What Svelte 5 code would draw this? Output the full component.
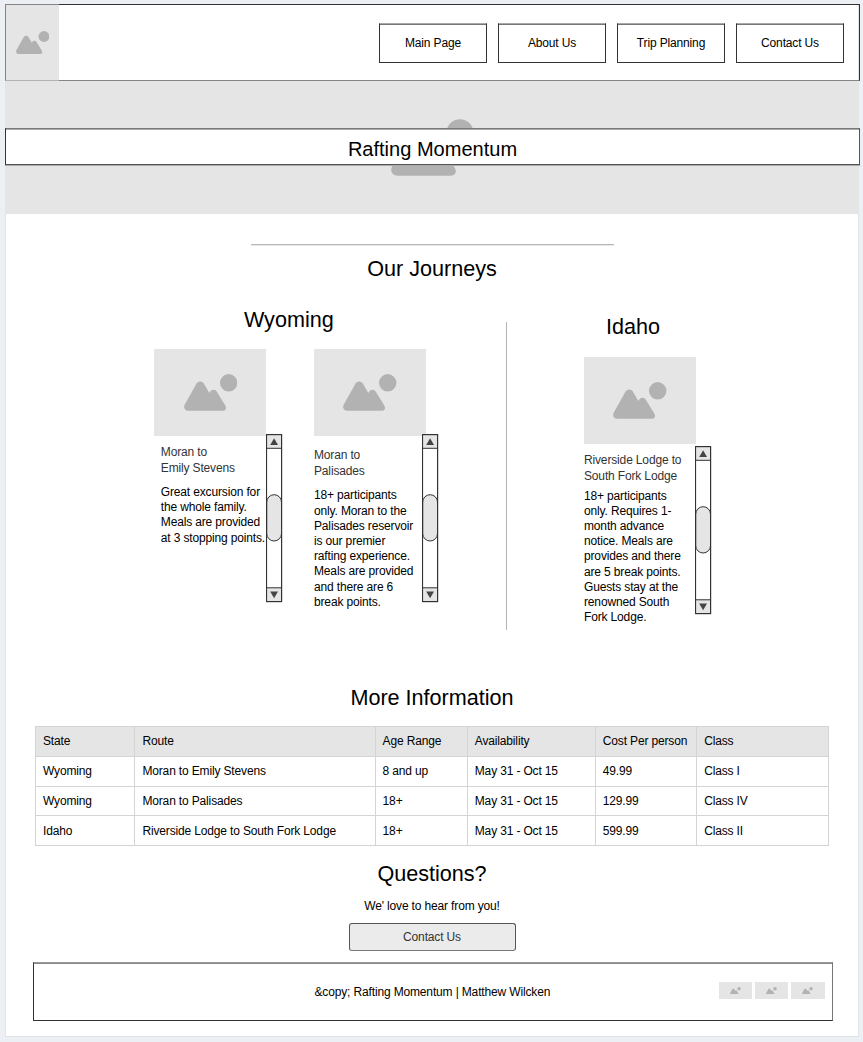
<script>
  const nav = ['Main Page', 'About Us', 'Trip Planning', 'Contact Us'];

  const emily = {
    kind: 'emily',
    title: ['Moran to', 'Emily Stevens'],
    lines: ['Great excursion for', 'the whole family.', 'Meals are provided', 'at 3 stopping points.'],
  };
  const palisades = {
    kind: 'palisades',
    title: ['Moran to', 'Palisades'],
    lines: [
      '18+ participants',
      'only. Moran to the',
      'Palisades reservoir',
      'is our premier',
      'rafting experience.',
      'Meals are provided',
      'and there are 6',
      'break points.',
    ],
  };
  const riverside = {
    kind: 'riverside',
    title: ['Riverside Lodge to', 'South Fork Lodge'],
    lines: [
      '18+ participants',
      'only. Requires 1-',
      'month advance',
      'notice. Meals are',
      'provides and there',
      'are 5 break points.',
      'Guests stay at the',
      'renowned South',
      'Fork Lodge.',
    ],
  };

  const columns = ['State', 'Route', 'Age Range', 'Availability', 'Cost Per person', 'Class'];
  const rows = [
    ['Wyoming', 'Moran to Emily Stevens', '8 and up', 'May 31 - Oct 15', '49.99', 'Class I'],
    ['Wyoming', 'Moran to Palisades', '18+', 'May 31 - Oct 15', '129.99', 'Class IV'],
    ['Idaho', 'Riverside Lodge to South Fork Lodge', '18+', 'May 31 - Oct 15', '599.99', 'Class II'],
  ];
</script>

{#snippet picture(width)}
  <svg class="picture" viewBox="0 0 53.4 37" {width} height={(width * 37) / 53.4} aria-hidden="true">
    <path d="M4.5 36.8C.8 36.8-.9 33.6.8 30.5L12 10.4C14 6.6 18.4 6.6 20.4 10.4L25.4 18.9C27.4 14.8 31 14.8 33 18L41.3 31.6C43 34.5 41.5 36.8 38.5 36.8Z" />
    <circle cx="44.7" cy="8.8" r="8.7" />
  </svg>
{/snippet}

{#snippet scrollbar()}
  <svg class="scrollbar" viewBox="0 0 17 169" width="17" height="169" aria-hidden="true">
    <rect x="0.6" y="0.7" width="15.4" height="167.3" fill="#fff" />
    <rect x="0.6" y="0.7" width="15.4" height="13.7" fill="#e5e5e5" />
    <rect x="0.6" y="153.5" width="15.4" height="14" fill="#e5e5e5" />
    <path d="M8.1 4.3L12 11H4.2Z" fill="#444" />
    <path d="M8.1 164.2L12 157.5H4.2Z" fill="#444" />
    <rect x="0.7" y="60.7" width="14.8" height="46.3" rx="7.4" fill="#e5e5e5" />
    <g fill="none" stroke="#333">
      <rect x="0.5" y="0.6" width="15.1" height="167" stroke-width="1.2" />
      <path d="M0 14.3H16M0 153.8H16" />
      <rect x="0.7" y="60.7" width="14.8" height="46.3" rx="7.4" />
    </g>
  </svg>
{/snippet}

{#snippet card(trip)}
  <article class="card {trip.kind}">
    <div class="photo">{@render picture(53.4)}</div>
    <div class="body">
      <div class="copy">
        <h4>{#each trip.title as line}<span>{line}</span>{/each}</h4>
        <p>{#each trip.lines as line}<span>{line}</span>{/each}</p>
      </div>
      {@render scrollbar()}
    </div>
  </article>
{/snippet}

<main>
  <header>
    <div class="logo">{@render picture(33.4)}</div>
    <nav>
      {#each nav as item}<a href="#top">{item}</a>{/each}
    </nav>
  </header>

  <section class="hero">
    {@render picture(82.4)}
    <h1>Rafting Momentum</h1>
  </section>

  <hr />
  <h2 class="journeys-title">Our Journeys</h2>
  <section class="journeys">
    <div class="state wyoming">
      <h3>Wyoming</h3>
      <div class="cards">
        {@render card(emily)}
        {@render card(palisades)}
      </div>
    </div>
    <div class="divider"></div>
    <div class="state idaho">
      <h3>Idaho</h3>
      {@render card(riverside)}
    </div>
  </section>

  <h2 class="info-title">More Information</h2>
  <div class="table">
    {#each columns as column}<div class="cell head">{column}</div>{/each}
    {#each rows as row}
      {#each row as value}<div class="cell">{value}</div>{/each}
    {/each}
  </div>

  <h2 class="questions-title">Questions?</h2>
  <p class="invite">We' love to hear from you!</p>
  <button>Contact Us</button>

  <footer>
    <span></span>
    <p>{'&copy; Rafting Momentum | Matthew Wilcken'}</p>
    <div class="social">
      {#each [1, 2, 3] as slot (slot)}<div>{@render picture(10.8)}</div>{/each}
    </div>
  </footer>
</main>

<style>
  :global(body) {
    background: #ecf0f5;
    overflow: hidden;
  }

  :global(#app) {
    display: flow-root;
    height: 1042px;
  }

  * {
    box-sizing: border-box;
  }

  main {
    width: 854px;
    height: 1033px;
    margin: 4px 0 0 5px;
    background: #fff;
    border: solid #dfe4e9;
    border-width: 0 1px 1px;
    font: 12px/15.2px 'Liberation Sans', Arial, sans-serif;
    letter-spacing: -0.15px;
    color: #000;
    display: flex;
    flex-direction: column;
    align-items: center;
  }

  h1,
  h2,
  h3,
  h4,
  p {
    margin: 0;
    font-weight: 400;
  }

  h1,
  h2,
  h3 {
    font-size: 21.6px;
    line-height: 26px;
    letter-spacing: 0;
    white-space: nowrap;
  }

  h2,
  h1,
  .hero,
  header,
  hr {
    flex: none;
  }

  .picture {
    display: block;
    flex: none;
    fill: #b2b2b2;
  }

  header {
    align-self: flex-start;
    width: 855px;
    height: 77px;
    margin-left: -1px;
    display: flex;
    justify-content: space-between;
    border: 1px solid #333;
    border-bottom-color: #858585;
  }

  .logo {
    width: 54px;
    margin: -1px 0 -1px -1px;
    display: grid;
    place-items: center;
    background: #e5e5e5;
    border: solid #858585;
    border-width: 1px 0 1px 1px;
    border-bottom-color: #b2b2b2;
  }

  nav {
    display: flex;
    gap: 11px;
    padding: 18px 15px 0 0;
  }

  nav a {
    width: 108px;
    height: 40px;
    display: flex;
    align-items: center;
    justify-content: center;
    padding-top: 1px;
    color: #000;
    text-decoration: none;
    border: 1px solid #333;
    border-top-color: #aaa;
    box-shadow: inset 0 1px #777;
  }

  .hero {
    width: 854px;
    height: 133px;
    margin: 0 -1px;
    display: grid;
    place-items: center;
    background: #e5e5e5;
  }

  .hero > :global(*) {
    grid-area: 1 / 1;
  }

  h1 {
    align-self: start;
    justify-self: start;
    width: 855px;
    height: 37px;
    margin-top: 47px;
    padding-top: 7px;
    font-size: 20.05px;
    text-align: center;
    background: #fff;
    border: 1px solid;
    border-color: #777 #555 #555 #333;
    box-shadow: inset 0 1px #aaa, 0 1px #aaa;
  }

  hr {
    width: 363px;
    height: 1px;
    margin: 30px 0 0;
    border: 0;
    background: #b8b8b8;
    box-shadow: 0 1px #e8e8e8;
  }

  .journeys-title {
    margin-top: 11px;
  }

  .journeys {
    align-self: flex-start;
    display: flex;
    height: 348px;
    flex: none;
    padding-left: 148.4px;
  }

  .state {
    display: flex;
    flex-direction: column;
  }

  .wyoming {
    width: 283.6px;
    padding-top: 25px;
  }

  .wyoming h3 {
    margin-bottom: 16px;
    padding-left: 89.5px;
  }

  .cards {
    display: flex;
    justify-content: space-between;
  }

  .divider {
    width: 1px;
    margin: 40px 77px 0 68px;
    background: #b2b2b2;
  }

  .idaho {
    padding-top: 32px;
  }

  .idaho h3 {
    margin-bottom: 17.4px;
    padding-left: 22px;
  }

  .card {
    width: 127.5px;
  }

  .palisades {
    width: 124px;
  }

  .photo {
    width: 112px;
    height: 86.5px;
    display: grid;
    place-items: center;
    background: #e5e5e5;
  }

  .body {
    display: flex;
    margin-top: -1.5px;
  }

  .riverside .body {
    margin-top: 2.1px;
  }

  .copy {
    width: 111.6px;
    flex: none;
    padding: 9.6px 0 0 6.4px;
    white-space: nowrap;
  }

  .palisades .copy {
    width: 108px;
    padding: 12.6px 0 0;
  }

  .riverside .copy {
    width: 111px;
    padding: 5.6px 0 0;
  }

  h4 {
    font-size: 12px;
    line-height: 16px;
    color: #333;
    margin-bottom: 9.3px;
  }

  .palisades h4 {
    margin-bottom: 9.8px;
  }

  .riverside h4 {
    margin-bottom: 5px;
  }

  h4 span,
  .copy p span {
    display: block;
  }

  .scrollbar {
    display: block;
    flex: none;
  }

  .info-title {
    margin-top: 55px;
  }

  .table {
    flex: none;
    width: 794px;
    margin-top: 15px;
    display: grid;
    grid-template-columns: 99.4px 240.2px 92.2px 128px 101.4px 131.8px;
    grid-template-rows: 30px 30px 29.4px 29.6px;
    border: solid #d4d4d4;
    border-width: 1px 0 0 1px;
  }

  .cell {
    display: flex;
    align-items: center;
    padding: 1px 0 0 7px;
    white-space: nowrap;
    border: solid #d4d4d4;
    border-width: 0 1px 1px 0;
  }

  .head {
    background: #e5e5e5;
  }

  .questions-title {
    margin-top: 15px;
  }

  .invite {
    margin-top: 11.8px;
  }

  button {
    flex: none;
    width: 167px;
    height: 28px;
    margin-top: 9px;
    padding: 2px 0 0;
    font: inherit;
    letter-spacing: inherit;
    color: #333;
    background: #ebebeb;
    border: 1px solid #555;
    border-bottom-color: #777;
    border-radius: 3px;
  }

  footer {
    flex: none;
    width: 800px;
    height: 59px;
    margin: 11px 0 0 1px;
    padding-right: 7px;
    display: grid;
    grid-template-columns: 281px 1fr auto;
    align-items: center;
    border: 1px solid #333;
    border-top-color: #999;
    border-right-color: #777;
    box-shadow: inset 0 1px #888;
  }

  footer p {
    padding-top: 2px;
  }

  .social {
    justify-self: end;
    display: flex;
    gap: 3px;
    margin-top: -2px;
  }

  .social div {
    width: 33.3px;
    height: 17px;
    display: grid;
    place-items: center;
    background: #e5e5e5;
  }
</style>
